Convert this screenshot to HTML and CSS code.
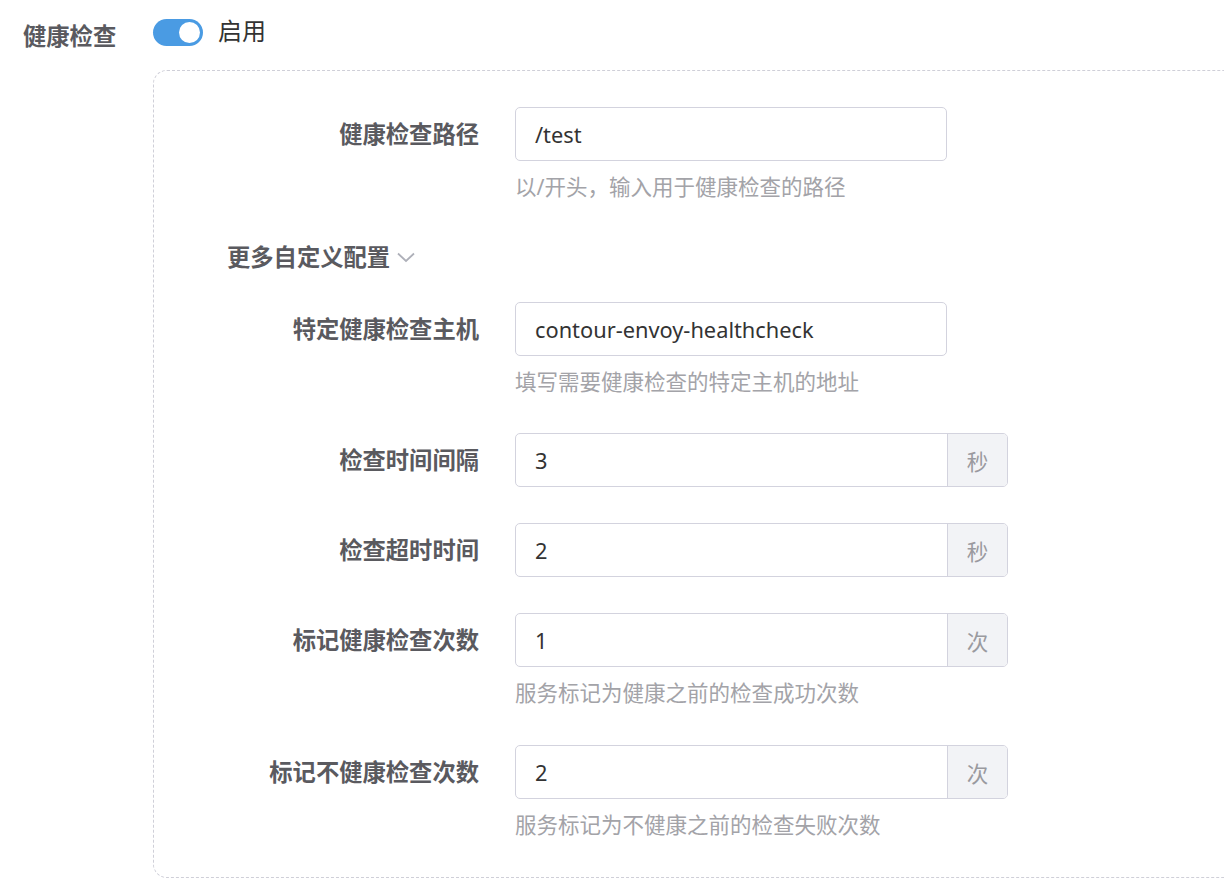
FILE: index.html
```html
<!DOCTYPE html>
<html lang="zh-CN">
<head>
<meta charset="utf-8">
<title>健康检查</title>
<link rel="stylesheet" href="styles.css">
</head>
<body>
<div class="page">
  <div class="header">
    <div class="header-label">健康检查</div>
    <div class="switch"><span class="knob"></span></div>
    <div class="switch-text">启用</div>
  </div>

  <div class="panel">
    <div class="item has-help">
      <label class="label">健康检查路径</label>
      <div class="control">
        <div class="input"><span class="value">/test</span></div>
        <div class="help">以/开头，输入用于健康检查的路径</div>
      </div>
    </div>

    <div class="more">更多自定义配置
      <svg class="chev" width="20" height="12" viewBox="0 0 20 12"><path d="M2 2.5 L10 10 L18 2.5" fill="none" stroke="#aeb0b9" stroke-width="1.8"/></svg>
    </div>

    <div class="item has-help tight">
      <label class="label">特定健康检查主机</label>
      <div class="control">
        <div class="input"><span class="value">contour-envoy-healthcheck</span></div>
        <div class="help">填写需要健康检查的特定主机的地址</div>
      </div>
    </div>

    <div class="item">
      <label class="label">检查时间间隔</label>
      <div class="control">
        <div class="input group"><span class="value">3</span><span class="addon">秒</span></div>
      </div>
    </div>

    <div class="item">
      <label class="label">检查超时时间</label>
      <div class="control">
        <div class="input group"><span class="value">2</span><span class="addon">秒</span></div>
      </div>
    </div>

    <div class="item has-help">
      <label class="label">标记健康检查次数</label>
      <div class="control">
        <div class="input group"><span class="value">1</span><span class="addon">次</span></div>
        <div class="help">服务标记为健康之前的检查成功次数</div>
      </div>
    </div>

    <div class="item has-help last">
      <label class="label">标记不健康检查次数</label>
      <div class="control">
        <div class="input group"><span class="value">2</span><span class="addon">次</span></div>
        <div class="help">服务标记为不健康之前的检查失败次数</div>
      </div>
    </div>
  </div>
</div>
</body>
</html>
```

FILE: styles.css
```css
html, body {
  margin: 0;
  padding: 0;
  background: #ffffff;
  overflow: hidden;
}

body {
  font-family: "Noto Sans", "Noto Sans CJK SC", sans-serif;
  color: #333;
  width: 1224px;
  height: 882px;
}

.page {
  padding-top: 17px;
}

.header {
  display: flex;
  align-items: flex-start;
  padding-left: 23px;
  height: 53px;
}

.header-label {
  width: 130px;
  font-size: 23.3px;
  font-weight: 700;
  color: #5a5a5f;
  line-height: 34px;
  margin-top: 2px;
}

.switch {
  position: relative;
  width: 50px;
  height: 27px;
  border-radius: 14px;
  background: #4a9be3;
  margin-top: 2px;
}

.knob {
  position: absolute;
  right: 3px;
  top: 3px;
  width: 21px;
  height: 21px;
  border-radius: 50%;
  background: #fff;
}

.switch-text {
  margin-left: 15px;
  font-size: 24px;
  line-height: 30px;
  margin-top: -1px;
  color: #333;
}

.panel {
  margin-left: 153px;
  width: 1100px;
  border: 1px dashed #cfcfd8;
  border-radius: 14px;
  padding-top: 36px;
  padding-bottom: 38px;
  box-sizing: border-box;
}

.item {
  display: flex;
  align-items: flex-start;
  margin-bottom: 36px;
}

.item.has-help {
  margin-bottom: 38px;
}

.item.tight {
  margin-bottom: 37px;
}

.item.last {
  margin-bottom: 0;
}

.label {
  width: 325px;
  text-align: right;
  font-size: 23.3px;
  font-weight: 700;
  color: #5a5a5f;
  line-height: 54px;
  flex-shrink: 0;
}

.control {
  margin-left: 36px;
  width: 493px;
}

.input {
  width: 432px;
  height: 54px;
  box-sizing: border-box;
  border: 1px solid #d3d3de;
  border-radius: 5px;
  background: #fff;
  display: flex;
  align-items: center;
  overflow: hidden;
}

.input.group {
  width: 493px;
}

.value {
  flex: 1;
  padding-left: 19px;
  font-size: 21.8px;
  color: #333;
}

.addon {
  width: 60px;
  height: 100%;
  box-sizing: border-box;
  border-left: 1px solid #d3d3de;
  background: #f2f3f6;
  color: #9a9a9f;
  font-size: 21.5px;
  display: flex;
  align-items: center;
  justify-content: center;
}

.help {
  margin-top: 12px;
  font-size: 21.5px;
  line-height: 28px;
  color: #a3a3a8;
  white-space: nowrap;
}

.more {
  margin-left: 73px;
  margin-top: 42px;
  margin-bottom: 31px;
  font-size: 23.3px;
  font-weight: 700;
  color: #5a5a5f;
  line-height: 28px;
  display: flex;
  align-items: center;
}

.chev {
  margin-left: 6px;
  margin-top: 0;
}
```
